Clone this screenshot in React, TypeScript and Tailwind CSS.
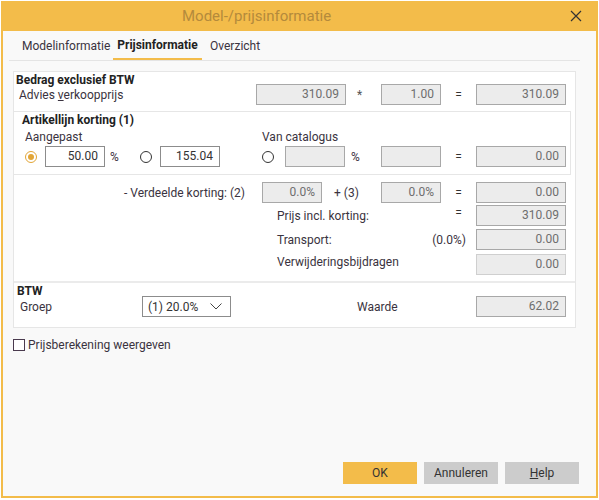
import React from "react";

const ro =
  "h-[21px] border border-[#a8a8a8] bg-[#ececec] text-[#6e6e6e] text-right pr-[6px] leading-[19px]";
const ed =
  "h-[21px] border border-[#8c8c8c] bg-white text-[#333] text-right pr-[6px] leading-[19px]";

function Radio({ on }: { on?: boolean }) {
  return (
    <span
      className={
        "flex h-[12px] w-[12px] items-center justify-center rounded-full border " +
        (on ? "border-[#e2a536]" : "border-[#333]")
      }
    >
      {on && <span className="h-[6px] w-[6px] rounded-full bg-[#e2a536]" />}
    </span>
  );
}

function Eq() {
  return <div className="w-[35px] text-center text-[#333]">=</div>;
}

export default function App() {
  return (
    <div
      className="h-[500px] w-[599px] bg-white text-[12px] text-[#3a3340]"
      style={{ fontFamily: "Roboto, 'Liberation Sans', sans-serif" }}
    >
      <div className="ml-px mt-px flex h-[497px] w-[597px] flex-col border-2 border-t-0 border-[#f3bc4a] bg-[#f9f9f9]">
        {/* title bar */}
        <div className="flex h-[30px] shrink-0 items-center bg-[#f3bc4a]">
          <div className="flex-1 pl-[179px] text-[15px] text-[#b48a3c]">
            Model-/prijsinformatie
          </div>
          <svg width="12" height="12" viewBox="0 0 12 12" className="mr-[14px]">
            <path d="M1 1L11 11M11 1L1 11" stroke="#333" strokeWidth="1.2" />
          </svg>
        </div>

        <div className="flex flex-1 flex-col pl-[6px]">
          {/* tabs */}
          <div className="flex h-[30px] w-[571px] items-end border-b border-[#e4e4e4] pl-[5px]">
            <div className="flex h-[28px] w-[99px] items-center pl-[8px] text-[#3a3340]">Modelinformatie</div>
            <div className="flex h-[28px] w-[89px] items-center justify-center border-b-2 border-[#f3bc4a] font-bold text-[#222]">
              Prijsinformatie
            </div>
            <div className="flex h-[28px] items-center px-[8px] text-[#3a3340]">Overzicht</div>
          </div>

          {/* main panel */}
          <div className="ml-[4px] mt-[10px] w-[563px] border border-[#e6e6e6] bg-white">
            <div className="pt-[1px]">
              <div className="h-[11px] pl-[2px] font-bold leading-[14px] text-[#222]">
                Bedrag exclusief BTW
              </div>
              <div className="flex h-[21px] items-center">
                <div className="w-[242px] pl-[5px]">
                  Advies <span className="underline">v</span>erkoopprijs
                </div>
                <div className={ro + " w-[90px]"}>310.09</div>
                <div className="w-[35px] pl-[11px] text-[#555]">*</div>
                <div className={ro + " w-[60px]"}>1.00</div>
                <Eq />
                <div className={ro + " w-[90px]"}>310.09</div>
              </div>

              {/* artikellijn korting */}
              <div className="mt-[6px] w-[557px] border-y border-r border-[#e6e6e6] pb-[7px]">
                <div className="h-[16px] pl-[8px] font-bold leading-[16px] text-[#222]">
                  Artikellijn korting (1)
                </div>
                <div className="flex h-[17px] items-center">
                  <div className="w-[248px] pl-[11px]">Aangepast</div>
                  <div>Van catalogus</div>
                </div>
                <div className="mt-px flex h-[21px] items-center">
                  <div className="ml-[11px]"><Radio on /></div>
                  <div className={ed + " ml-[8px] w-[60px]"}>50.00</div>
                  <div className="w-[35px] pl-[5px]">%</div>
                  <Radio />
                  <div className={ed + " ml-[8px] w-[60px]"}>155.04</div>
                  <div className="ml-[42px]"><Radio /></div>
                  <div className={ro + " ml-[11px] w-[60px]"}></div>
                  <div className="w-[36px] pl-[6px]">%</div>
                  <div className={ro + " w-[60px]"}></div>
                  <Eq />
                  <div className={ro + " w-[90px]"}>0.00</div>
                </div>
              </div>

              <div className="mt-[7px] flex h-[21px] items-center">
                <div className="w-[248px] pr-[17px] text-right">- Verdeelde korting: (2)</div>
                <div className={ro + " w-[60px]"}>0.0%</div>
                <div className="w-[59px] pl-[12px]">+ (3)</div>
                <div className={ro + " w-[60px]"}>0.0%</div>
                <Eq />
                <div className={ro + " w-[90px]"}>0.00</div>
              </div>

              <div className="mt-[2px] flex h-[21px] items-center">
                <div className="w-[427px] pl-[263px]">Prijs incl. korting:</div>
                <div className="w-[35px] pb-[5px] text-center text-[#333]">=</div>
                <div className={ro + " w-[90px]"}>310.09</div>
              </div>

              <div className="mt-[3px] flex h-[21px] items-center">
                <div className="flex w-[452px] justify-between pl-[263px]">
                  <span>Transport:</span>
                  <span>(0.0%)</span>
                </div>
                <div className="w-[10px]" />
                <div className={ro + " w-[90px]"}>0.00</div>
              </div>

              <div className="mt-[4px] flex h-[21px] items-center">
                <div className="w-[462px] pb-[6px] pl-[263px]">Verwijderingsbijdragen</div>
                <div className="h-[21px] w-[90px] border border-[#cfcfcf] bg-[#ececec] pr-[6px] text-right leading-[19px] text-[#6e6e6e]">
                  0.00
                </div>
              </div>
              <div className="h-[6px]" />
            </div>

            {/* BTW */}
            <div className="border-t-2 border-[#ebebeb] pb-[10px]">
              <div className="h-[13px] pl-[3px] font-bold leading-[16px] text-[#222]">BTW</div>
              <div className="flex h-[21px] items-center">
                <div className="w-[128px] pl-[6px]">Groep</div>
                <div className="flex h-[21px] w-[89px] items-center justify-between border border-[#8c8c8c] bg-white pl-[5px] pr-[8px] text-[#333]">
                  <span>(1) 20.0%</span>
                  <svg width="12" height="7" viewBox="0 0 12 7">
                    <path d="M0.5 0.5L6 6L11.5 0.5" fill="none" stroke="#444" strokeWidth="1" />
                  </svg>
                </div>
                <div className="w-[245px] pl-[126px]">Waarde</div>
                <div className={ro + " w-[90px]"}>62.02</div>
              </div>
            </div>
          </div>

          {/* checkbox */}
          <div className="mt-[8px] flex items-center">
            <span className="ml-[4px] h-[12px] w-[12px] border border-[#4a3a4e] bg-white" />
            <span className="ml-[3px]">Prijsberekening weergeven</span>
          </div>

          <div className="flex-1" />

          {/* buttons */}
          <div className="flex justify-end gap-[7px] pb-[12px] pr-[17px] text-[#333]">
            <div className="flex h-[22px] w-[74px] items-center justify-center bg-[#f3bc4a]">OK</div>
            <div className="flex h-[22px] w-[74px] items-center justify-center bg-[#cccccc]">Annuleren</div>
            <div className="flex h-[22px] w-[74px] items-center justify-center bg-[#cccccc]">
              <span className="underline">H</span>elp
            </div>
          </div>
        </div>
      </div>
    </div>
  );
}
